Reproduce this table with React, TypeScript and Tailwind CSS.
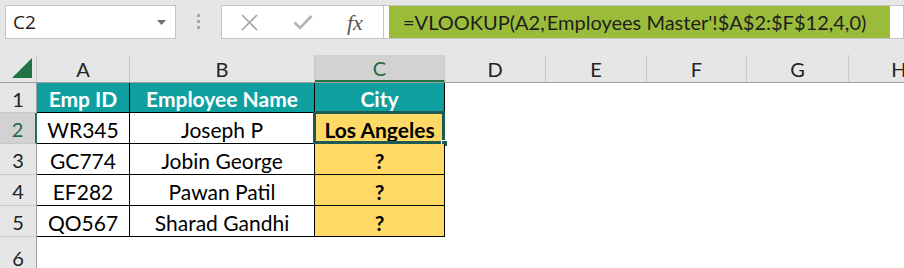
import React from "react";

const FONT = { fontFamily: "Lato, 'Open Sans', sans-serif" };

const colWidths = [93, 185, 130, 101, 101, 100, 102, 101];
const colLetters = ["A", "B", "C", "D", "E", "F", "G", "H"];
const rowHeights = [30, 31, 31, 31, 31, 40];

type Cell = { text: string; kind: "head" | "plain" | "yellow" | "sel" };

const data: Cell[][] = [
  [
    { text: "Emp ID", kind: "head" },
    { text: "Employee Name", kind: "head" },
    { text: "City", kind: "head" },
  ],
  [
    { text: "WR345", kind: "plain" },
    { text: "Joseph P", kind: "plain" },
    { text: "Los Angeles", kind: "sel" },
  ],
  [
    { text: "GC774", kind: "plain" },
    { text: "Jobin George", kind: "plain" },
    { text: "?", kind: "yellow" },
  ],
  [
    { text: "EF282", kind: "plain" },
    { text: "Pawan Patil", kind: "plain" },
    { text: "?", kind: "yellow" },
  ],
  [
    { text: "QO567", kind: "plain" },
    { text: "Sharad Gandhi", kind: "plain" },
    { text: "?", kind: "yellow" },
  ],
];

function DataCell({ cell, w, h }: { cell: Cell; w: number; h: number }) {
  const base =
    "relative flex shrink-0 items-center justify-center pt-[2px] text-[21px] leading-none border-r border-b border-black";
  if (cell.kind === "head") {
    return (
      <div className={`${base} bg-[#0f9f9f] font-bold text-white`} style={{ width: w, height: h }}>
        {cell.text}
      </div>
    );
  }
  if (cell.kind === "plain") {
    return (
      <div className={`${base} bg-white text-black`} style={{ width: w, height: h }}>
        {cell.text}
      </div>
    );
  }
  return (
    <div className={`${base} bg-[#ffd966] font-bold text-black`} style={{ width: w, height: h }}>
      {cell.text}
      {cell.kind === "sel" && (
        <>
          <div className="pointer-events-none absolute -left-[2px] -top-[2px] -right-[1px] -bottom-[1px] border-[3px] border-[#1d5a52]" />
          <div className="absolute -bottom-[4px] -right-[4px] h-[7px] w-[7px] border border-white bg-[#1d5a52]" />
        </>
      )}
    </div>
  );
}

export default function App() {
  return (
    <div className="flex h-[268px] w-[904px] flex-col overflow-hidden bg-[#e6e6e6]" style={FONT}>
      {/* Top bar */}
      <div className="flex h-[55px] shrink-0 items-start pt-[5px]">
        <div className="ml-[5px] flex h-[34px] w-[171px] items-center justify-between border border-[#c6c6c6] bg-white pl-[7px] pr-[9px]">
          <span className="text-[19px] text-[#222]" style={{ fontFamily: "'Open Sans', sans-serif" }}>
            C2
          </span>
          <svg width="9" height="5" viewBox="0 0 9 5">
            <path d="M0 0 L9 0 L4.5 5 Z" fill="#6e6e6e" />
          </svg>
        </div>
        <div className="ml-[21px] mt-[9px] flex flex-col gap-[3px]">
          <div className="h-[3px] w-[3px] bg-[#a8a8a8]" />
          <div className="h-[3px] w-[3px] bg-[#a8a8a8]" />
          <div className="h-[3px] w-[3px] bg-[#a8a8a8]" />
        </div>
        <div className="ml-[21px] flex h-[34px] flex-1 items-center border border-[#c6c6c6] bg-white">
          <div className="flex h-full w-[162px] items-center border-r border-[#c6c6c6]">
            <svg className="ml-[18px]" width="19" height="17" viewBox="0 0 19 17">
              <path d="M2 1 L17 16 M17 1 L2 16" stroke="#a6a6a6" strokeWidth="1.6" fill="none" />
            </svg>
            <svg className="ml-[34px]" width="20" height="16" viewBox="0 0 20 16">
              <path d="M1.5 8.5 L7 14 L18.5 2" stroke="#b4b4b4" strokeWidth="2.6" fill="none" />
            </svg>
            <span
              className="ml-[34px] text-[22px] italic text-[#555]"
              style={{ fontFamily: "'Liberation Serif', serif" }}
            >
              fx
            </span>
          </div>
          <div className="ml-[5px] flex h-full w-[501px] items-center bg-[#9bbb3b] pl-[14px] text-[20px] text-[#1e1e1e]">
            =VLOOKUP(A2,'Employees Master'!$A$2:$F$12,4,0)
          </div>
        </div>
      </div>

      {/* Column header row */}
      <div className="flex h-[28px] shrink-0 border-b border-[#a0a0a0]">
        <div className="flex w-[37px] shrink-0 items-end justify-end border-r border-[#c8c8c8] pb-[4px] pr-[4px]">
          <svg width="20" height="20" viewBox="0 0 20 20">
            <path d="M20 0 L20 20 L0 20 Z" fill="#217346" />
          </svg>
        </div>
        {colLetters.map((l, i) => (
          <div
            key={l}
            className={`flex shrink-0 items-center justify-center border-r border-[#c8c8c8] text-[20px] ${
              i === 2 ? "border-b-2 border-b-[#217346] bg-[#d2d2d2] text-[#1e6b3f]" : "text-[#222]"
            }`}
            style={{ width: colWidths[i] }}
          >
            {l}
          </div>
        ))}
      </div>

      {/* Rows */}
      {rowHeights.map((h, r) => (
        <div key={r} className="flex shrink-0" style={{ height: h }}>
          <div
            className={`flex w-[37px] shrink-0 items-center justify-center border-b border-[#c8c8c8] pt-[2px] text-[20px] ${
              r === 1
                ? "border-r-2 border-r-[#217346] bg-[#d2d2d2] text-[#1e6b3f]"
                : "border-r border-r-[#a0a0a0] text-[#222]"
            }`}
          >
            {r + 1}
          </div>
          {r < 5 && data[r].map((c, ci) => <DataCell key={ci} cell={c} w={colWidths[ci]} h={h} />)}
          <div className="flex-1 bg-white" />
        </div>
      ))}
    </div>
  );
}
